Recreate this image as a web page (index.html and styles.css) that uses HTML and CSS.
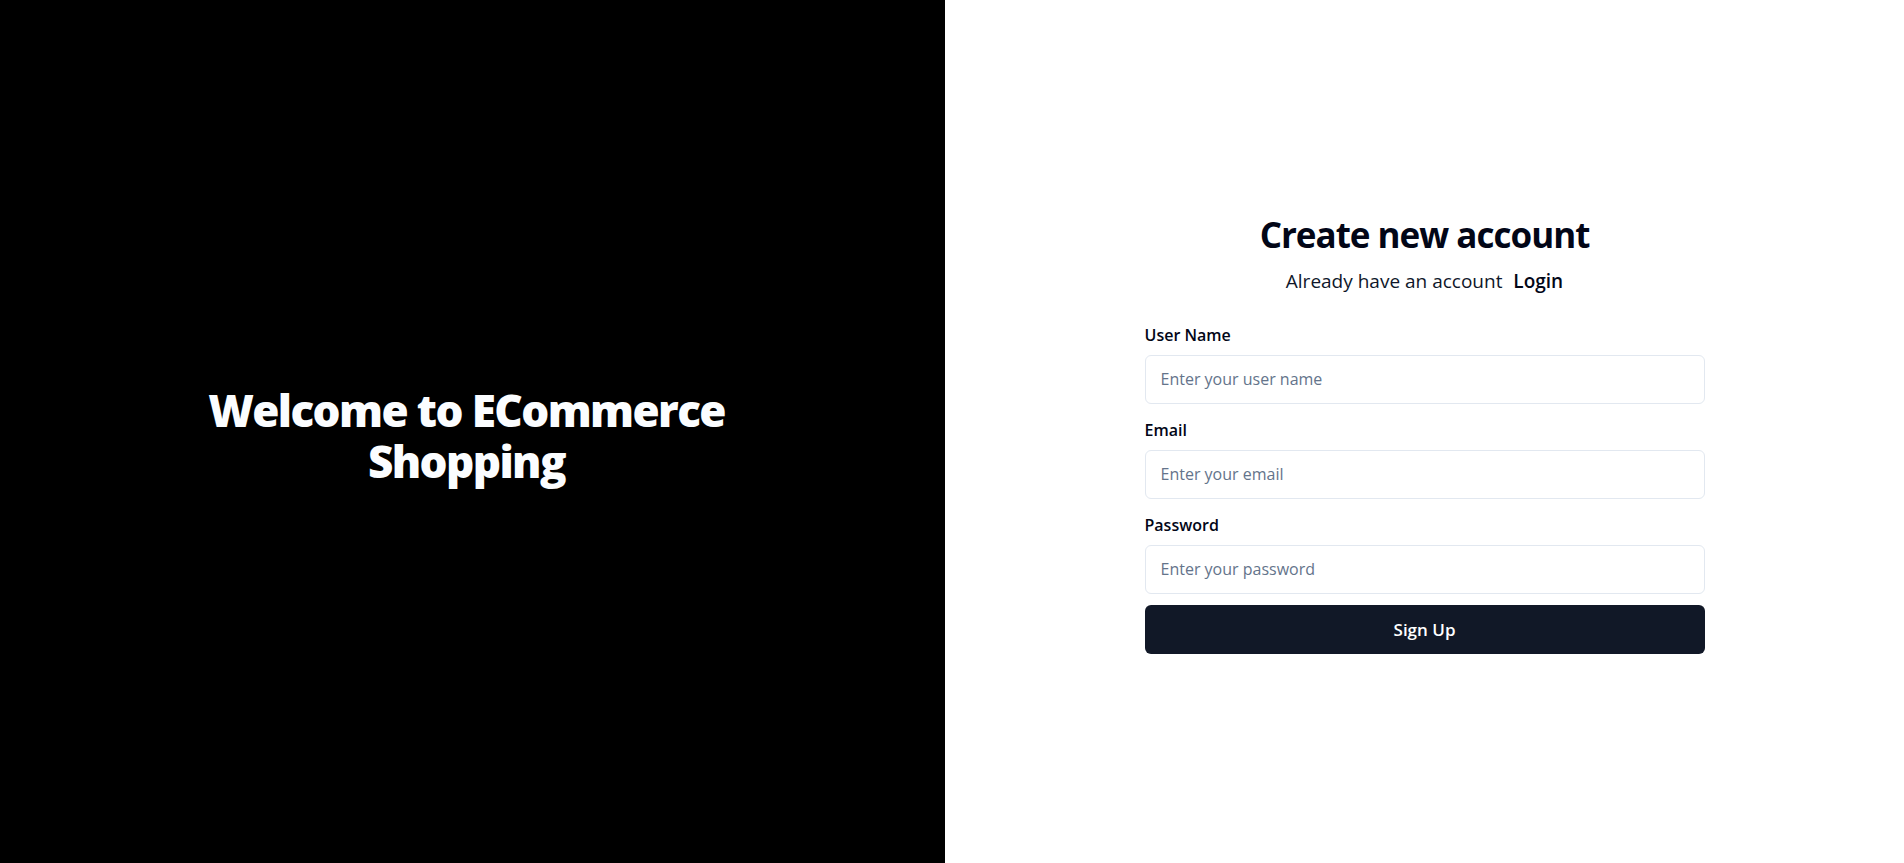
FILE: index.html
```html
<!DOCTYPE html>
<html lang="en">
<head>
<meta charset="utf-8">
<title>Sign Up</title>
<link rel="stylesheet" href="styles.css">
</head>
<body>
<div class="page">
  <section class="hero">
    <h2 class="hero-title">Welcome to ECommerce<br>Shopping</h2>
  </section>
  <main class="auth">
    <div class="auth-box">
      <div class="auth-head">
        <h1 class="auth-title">Create new account</h1>
        <p class="auth-sub">Already have an account <a class="auth-link" href="#">Login</a></p>
      </div>
      <form class="form">
        <div class="fields">
          <div class="field">
            <label class="label" for="u">User Name</label>
            <input class="input" id="u" type="text" placeholder="Enter your user name">
          </div>
          <div class="field">
            <label class="label" for="e">Email</label>
            <input class="input" id="e" type="email" placeholder="Enter your email">
          </div>
          <div class="field">
            <label class="label" for="p">Password</label>
            <input class="input" id="p" type="password" placeholder="Enter your password">
          </div>
        </div>
        <button class="btn" type="button">Sign Up</button>
      </form>
    </div>
  </main>
</div>
</body>
</html>
```

FILE: styles.css
```css
* { box-sizing: border-box; }
html, body { margin: 0; padding: 0; }
body {
  font-family: "Open Sans", "Noto Sans", "Liberation Sans", sans-serif;
  background: #ffffff;
  color: #020617;
}
.page {
  display: flex;
  height: 100vh;
}
.hero {
  width: 945px;
  flex: none;
  background: #000000;
  display: flex;
  align-items: center;
  justify-content: center;
  padding: 8px 12px 0 0;
}
.hero-title {
  margin: 0;
  color: #fbfdff;
  font-size: 44px;
  font-weight: 800;
  line-height: 51px;
  text-align: center;
  letter-spacing: -1.6px;
}
.auth {
  flex: 1;
  display: flex;
  align-items: center;
  justify-content: center;
  padding-top: 5px;
}
.auth-box {
  width: 560px;
}
.auth-head {
  text-align: center;
}
.auth-title {
  margin: 0;
  font-size: 35px;
  line-height: 40px;
  font-weight: 700;
  letter-spacing: -1px;
  color: #020617;
}
.auth-sub {
  margin: 12px 0 0;
  font-size: 19px;
  line-height: 28px;
  color: #0f172a;
}
.auth-link {
  color: #020617;
  font-weight: 600;
  text-decoration: none;
  margin-left: 6px;
}
.form {
  margin-top: 28px;
  display: flex;
  flex-direction: column;
  gap: 11px;
}
.fields {
  display: flex;
  flex-direction: column;
  gap: 14px;
}
.field {
  display: flex;
  flex-direction: column;
  gap: 8px;
}
.label {
  font-size: 16px;
  line-height: 24px;
  font-weight: 600;
  color: #020617;
}
.input {
  height: 49px;
  width: 100%;
  border: 1px solid #e2e8f0;
  border-radius: 6px;
  padding: 0 15px;
  font-family: inherit;
  font-size: 16px;
  color: #020617;
  background: #ffffff;
}
.input::placeholder {
  color: #64748b;
}
.btn {
  height: 49px;
  width: 100%;
  border: 0;
  border-radius: 6px;
  background: #111827;
  color: #ffffff;
  font-family: inherit;
  font-size: 17px;
  font-weight: 600;
}
```
